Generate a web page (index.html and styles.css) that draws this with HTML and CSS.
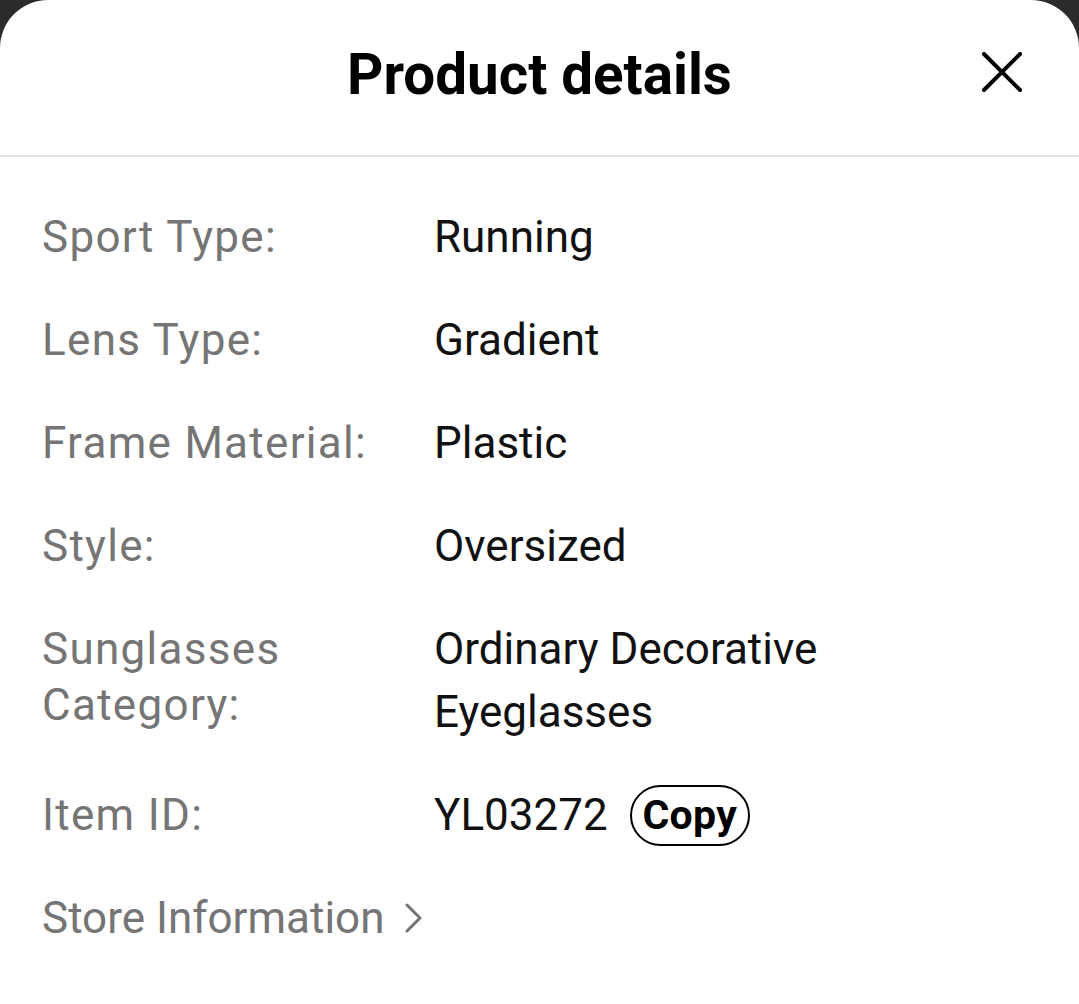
FILE: index.html
```html
<!DOCTYPE html>
<html>
<head>
<meta charset="utf-8">
<link rel="stylesheet" href="styles.css">
</head>
<body>
<div class="sheet">
  <header class="head">
    <h1 class="title">Product details</h1>
    <button class="close" aria-label="Close">
      <svg width="40" height="40" viewBox="0 0 40 40"><path d="M2 2 L38 38 M38 2 L2 38" stroke="#000" stroke-width="4" stroke-linecap="round" fill="none"/></svg>
    </button>
  </header>
  <div class="list">
    <div class="row"><div class="label">Sport Type:</div><div class="value">Running</div></div>
    <div class="row"><div class="label">Lens Type:</div><div class="value">Gradient</div></div>
    <div class="row"><div class="label">Frame Material:</div><div class="value">Plastic</div></div>
    <div class="row"><div class="label">Style:</div><div class="value">Oversized</div></div>
    <div class="row"><div class="label">Sunglasses Category:</div><div class="value">Ordinary Decorative Eyeglasses</div></div>
    <div class="row"><div class="label">Item ID:</div><div class="value id">YL03272 <span class="copy">Copy</span></div></div>
    <div class="row store"><div class="label">Store Information <svg class="chev" width="17" height="30" viewBox="0 0 17 30"><path d="M2 2 L15 15 L2 28" stroke="#757575" stroke-width="3" fill="none" stroke-linecap="round" stroke-linejoin="round"/></svg></div></div>
  </div>
</div>
</body>
</html>
```
FILE: styles.css
```css
html, body { margin: 0; padding: 0; height: 100%; }
body { background: #2b2b2b; font-family: Roboto, "Noto Sans", sans-serif; }
.sheet {
  background: #fff;
  border-radius: 48px 48px 0 0;
  min-height: 100%;
  box-sizing: border-box;
}
.head {
  height: 157px;
  border-bottom: 2px solid #e0e0e0;
  display: flex;
  align-items: center;
  justify-content: center;
  position: relative;
  box-sizing: border-box;
}
.title {
  margin: 0;
  font-size: 56.5px;
  font-weight: 700;
  color: #000;
  padding-bottom: 6px;
}
.close {
  position: absolute;
  right: 57px;
  top: 52px;
  background: none;
  border: 0;
  padding: 0;
  width: 40px;
  height: 40px;
}
.close svg { display: block; }
.list {
  padding: 49px 42px 0 42px;
  display: flex;
  flex-direction: column;
  gap: 40px;
}
.row { display: flex; align-items: flex-start; }
.label {
  width: 392px;
  flex: none;
  color: #757575;
  font-size: 44px;
  letter-spacing: 1.3px;
  line-height: 56px;
  padding-top: 3px;
  padding-right: 20px;
  box-sizing: border-box;
}
.value {
  color: #111;
  font-size: 44px;
  line-height: 63px;
  flex: 1;
  padding-right: 200px;
}
.id { display: flex; align-items: center; }
.copy {
  display: inline-flex;
  align-items: center;
  justify-content: center;
  margin-left: 22px;
  width: 120px;
  height: 61px;
  box-sizing: border-box;
  border: 2px solid #000;
  border-radius: 31px;
  font-weight: 700;
  font-size: 41px;
  letter-spacing: 0.3px;
  color: #000;
}
.store .label { width: auto; display: flex; align-items: center; gap: 20px; letter-spacing: 0; }
.chev { display: block; }
```
